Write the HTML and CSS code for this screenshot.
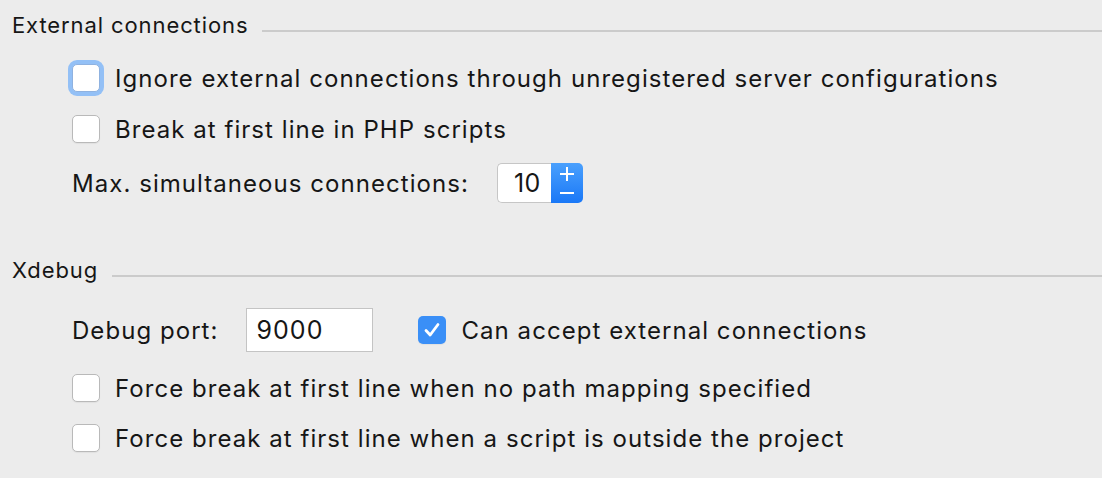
FILE: index.html
```html
<!DOCTYPE html>
<html>
<head>
<meta charset="utf-8">
<link rel="stylesheet" href="styles.css">
</head>
<body>
<div class="panel">
  <div class="group-title title-ext"><span class="title-text">External connections</span><span class="rule"></span></div>
  <div class="row row-1">
    <span class="cb focused"></span><span class="label">Ignore external connections through unregistered server configurations</span>
  </div>
  <div class="row row-2">
    <span class="cb"></span><span class="label">Break at first line in PHP scripts</span>
  </div>
  <div class="row row-3 plain">
    <span class="label">Max. simultaneous connections:</span>
    <div class="spinner">
      <span class="spin-field">10</span>
      <span class="spin-btn"><span class="plus"></span><span class="minus"></span></span>
    </div>
  </div>

  <div class="group-title title-x"><span class="title-text">Xdebug</span><span class="rule"></span></div>
  <div class="row row-4 plain">
    <span class="label">Debug port:</span>
    <span class="textfield">9000</span>
    <span class="cb checked"><svg viewBox="0 0 28 28" width="28" height="28"><path d="M8 14.5 L12.2 19 L20 8.5" fill="none" stroke="#fff" stroke-width="2.8" stroke-linecap="round" stroke-linejoin="round"/></svg></span><span class="label">Can accept external connections</span>
  </div>
  <div class="row row-5">
    <span class="cb"></span><span class="label">Force break at first line when no path mapping specified</span>
  </div>
  <div class="row row-6">
    <span class="cb"></span><span class="label">Force break at first line when a script is outside the project</span>
  </div>
</div>
</body>
</html>
```

FILE: styles.css
```css
html, body {
  margin: 0;
  padding: 0;
  background: #ececec;
}
body {
  width: 1102px;
  height: 478px;
  overflow: hidden;
  font-family: "Inter", "Liberation Sans", sans-serif;
  font-size: 24px;
  letter-spacing: 1.05px;
  color: #161616;
}
.panel {
  display: flex;
  flex-direction: column;
  padding-left: 12px;
}
.group-title {
  display: flex;
  align-items: flex-end;
  height: 26px;
  line-height: 26px;
  font-size: 22px;
  letter-spacing: 0.9px;
}
.title-ext { margin-top: 12px; }
.title-x { margin-top: 54px; }
.title-text { white-space: nowrap; }
.rule {
  flex: 1;
  height: 2px;
  background: #cbcbcb;
  margin-left: 14px;
  margin-bottom: 6px;
}
.row {
  display: flex;
  align-items: center;
  height: 36px;
  margin-left: 60px;
  white-space: nowrap;
}
.row-1 { margin-top: 22px; }
.row-2 { margin-top: 15px; }
.row-3 { margin-top: 16px; height: 40px; }
.row-4 { margin-top: 25px; height: 44px; }
.row-5 { margin-top: 18px; }
.row-6 { margin-top: 14px; }

.cb {
  box-sizing: border-box;
  width: 28px;
  height: 28px;
  flex: none;
  border: 1px solid #b9b9b9;
  border-radius: 5px;
  background: #fff;
  box-shadow: 0 1px 1px rgba(0,0,0,0.05);
  margin-right: 15px;
  display: flex;
}
.cb.focused {
  border-color: #8fb2e0;
  box-shadow: 0 0 0 4px #93c0f6;
}
.cb.checked {
  border: none;
  background: #3a8ff7;
  margin-left: 45px;
}
.cb.checked svg { display: block; }

.spinner {
  display: flex;
  height: 40px;
  margin-left: 28px;
  letter-spacing: 0.5px;
}
.spin-field {
  box-sizing: border-box;
  width: 54px;
  height: 40px;
  border: 1px solid #c6c6c6;
  border-right: none;
  border-radius: 5px 0 0 5px;
  background: #fff;
  text-align: right;
  padding-right: 10px;
  line-height: 38px;
  font-size: 25px;
}
.spin-btn {
  position: relative;
  width: 32px;
  height: 40px;
  border-radius: 0 5px 5px 0;
  background: linear-gradient(#4aa0fd, #1a78f7);
}
.plus {
  position: absolute;
  left: 9px;
  top: 4px;
  width: 14px;
  height: 14px;
}
.plus::before, .plus::after {
  content: "";
  position: absolute;
  background: #fff;
}
.plus::before { left: 0; top: 6px; width: 14px; height: 2px; }
.plus::after { left: 6px; top: 0; width: 2px; height: 14px; }
.minus {
  position: absolute;
  left: 9px;
  top: 29px;
  width: 14px;
  height: 2px;
  background: #fff;
}
.textfield {
  box-sizing: border-box;
  width: 127px;
  height: 44px;
  border: 1px solid #c4c4c4;
  background: #fff;
  margin-left: 28px;
  padding-left: 9px;
  line-height: 42px;
  font-size: 25px;
}
```
